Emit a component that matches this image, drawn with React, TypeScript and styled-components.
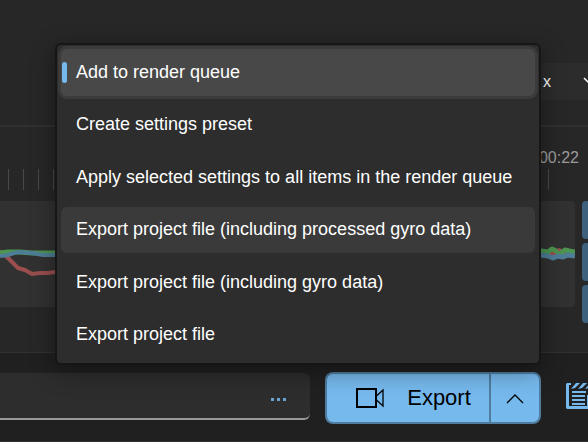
import React from "react";
import styled, { createGlobalStyle } from "styled-components";

const GlobalStyle = createGlobalStyle`
  *, *::before, *::after { box-sizing: border-box; }
  html, body, #root { height: 100%; }
  body {
    margin: 0;
    overflow: hidden;
    background: #272727;
    color: #ffffff;
    font-family: "Liberation Sans", Arial, sans-serif;
  }
  button, select { font: inherit; color: inherit; border: 0; margin: 0; padding: 0; }
`;

const Page = styled.main`
  display: flex;
  flex-direction: column;
  min-height: 100%;
  overflow: hidden;
`;

const PlayerBar = styled.header`
  display: flex;
  justify-content: flex-end;
  padding: 63px 0 25px;
  border-bottom: 2px solid #313131;
`;

const Combo = styled.label`
  position: relative;
  display: flex;
  width: 56px;
  height: 37px;
  background: #2c2c2c;
`;

const ComboSelect = styled.select`
  width: 100%;
  padding-left: 11px;
  appearance: none;
  background: transparent;
  font-size: 16px;
`;

const ComboArrow = styled.svg`
  position: absolute;
  right: -7px;
  top: 14px;
  pointer-events: none;
`;

const Timeline = styled.section`
  display: flex;
  gap: 7px;
  height: 225px;
  padding: 21px 0 29px;
`;

const Tracks = styled.div`
  display: flex;
  flex: 1;
  flex-direction: column;
  min-width: 0;
`;

const TimeLabel = styled.time`
  align-self: flex-end;
  margin-right: -4px;
  font-size: 16px;
  line-height: 20px;
  color: #9b9b9b;
`;

const Ruler = styled.div`
  height: 21px;
  margin: 1px 24px 11px 0;
  background: repeating-linear-gradient(to right, transparent 0 8px, #484848 8px 9px, transparent 9px 15px);
`;

const Chart = styled.svg`
  display: block;
  width: 100%;
  height: 106px;
  border-radius: 0 4px 4px 0;
  background: #313131;
`;

const SideButtons = styled.div`
  display: flex;
  flex-direction: column;
  gap: 4px;
  padding-top: 53px;
  width: 6px;
`;

const SideButton = styled.button`
  height: 38px;
  border-radius: 4px 0 0 4px;
  background: #3d607c;
`;

const Footer = styled.footer`
  display: flex;
  flex: 1;
  align-items: flex-start;
  gap: 15px;
  padding-top: 19px;
  border-top: 1px solid #313131;
  border-bottom: 1px solid #313131;
  background: #202020;
`;

const OutputField = styled.div`
  display: flex;
  flex: 1;
  align-items: center;
  height: 47px;
  margin-top: 1px;
  padding-right: 18px;
  border-bottom: 2px solid #999999;
  border-radius: 0 6px 6px 0;
  background: #2d2d2d;
`;

const PathInput = styled.input`
  flex: 1;
  min-width: 0;
  border: 0;
  outline: 0;
  background: transparent;
  color: #ffffff;
  font: inherit;
`;

const BrowseButton = styled.button`
  display: flex;
  align-items: center;
  justify-content: center;
  width: 28px;
  height: 28px;
  padding-top: 6px;
  background: transparent;
`;

const ExportGroup = styled.div`
  position: relative;
  display: flex;
  width: 216px;
  height: 52px;
`;

const ExportButton = styled.button`
  display: flex;
  flex: 1;
  align-items: center;
  justify-content: center;
  gap: 23px;
  padding-left: 11px;
  border: 2px solid #507d9f;
  border-right-width: 0;
  border-radius: 8px 0 0 8px;
  background: #76b9ed;
  color: #000000;
  font-size: 22px;
`;

const ExpandButton = styled.button`
  display: flex;
  align-items: center;
  justify-content: center;
  width: 52px;
  border: 2px solid #507d9f;
  border-radius: 0 8px 8px 0;
  background: #76b9ed;
  color: #000000;
`;

const QueueButton = styled.button`
  display: flex;
  align-items: center;
  width: 22px;
  height: 48px;
  margin-left: 10px;
  overflow: hidden;
  background: transparent;

  svg { flex-shrink: 0; }
`;

const Menu = styled.div`
  position: absolute;
  right: 0;
  bottom: calc(100% + 7px);
  z-index: 1;
  display: grid;
  grid-template-rows: repeat(6, 1fr);
  width: 486px;
  height: 322px;
  padding: 1px 1px 2px;
  border: 2px solid #161616;
  border-radius: 6px;
  background: #2d2d2d;
  box-shadow: 0 6px 24px rgba(0, 0, 0, 0.4);
`;

const MenuItem = styled.button<{ $tone?: "current" | "hover" }>`
  display: flex;
  align-items: center;
  margin: 3px;
  padding-left: 15px;
  border-radius: 6px;
  background: ${({ $tone }) => ($tone === "current" ? "#484848" : $tone === "hover" ? "#3a3a3a" : "transparent")};
  box-shadow: ${({ $tone }) => ($tone === "current" ? "0 0 0 3px #3b3b3b" : "none")};
  font-size: 18px;
  text-align: left;
  white-space: nowrap;

  &::before {
    content: "";
    display: ${({ $tone }) => ($tone === "current" ? "block" : "none")};
    width: 5px;
    height: 21px;
    margin-left: -14px;
    margin-right: 9px;
    border-radius: 3px;
    background: #76b9ed;
  }
`;

const menuItems: { label: string; tone?: "current" | "hover" }[] = [
  { label: "Add to render queue", tone: "current" },
  { label: "Create settings preset" },
  { label: "Apply selected settings to all items in the render queue" },
  { label: "Export project file (including processed gyro data)", tone: "hover" },
  { label: "Export project file (including gyro data)" },
  { label: "Export project file" },
];

const GyroChart = () => (
  <Chart viewBox="0 0 575 106" preserveAspectRatio="none" aria-label="Gyro data">
    <g fill="none" strokeWidth="4" strokeLinejoin="round">
      <path stroke="#9a4e4e" d="M0 50L4 53 8 57 13 62 18 67 25 69 32 73 40 72 48 72 55 71 120 60 300 54 541 52 548 52 552 54 559 49 565 52 575 51" />
      <path stroke="#4d9550" strokeWidth="5" d="M0 52L8 51 20 51 32 52 45 52 55 52 300 52 541 50 548 51 552 48 556 50 561 52 565 49 569 50 575 51" />
      <path stroke="#4e7e97" d="M0 55L8 54 14 52 20 51 32 52 43 54 55 54 300 55 541 54" />
      <path stroke="#4e7e97" strokeWidth="5" d="M541 54L548 55 553 57 558 55 563 56 568 54 575 55" />
    </g>
    <path fill="#9a4e4e" d="M551 51h3v3h-3zM558 48h2v2h-2z" />
  </Chart>
);

export default function App() {
  return (
    <>
      <GlobalStyle />
      <Page>
        <PlayerBar>
          <Combo>
            <ComboSelect aria-label="Playback speed">
              <option>x</option>
            </ComboSelect>
            <ComboArrow width="12" height="8" viewBox="0 0 12 8" fill="none" stroke="#ffffff" strokeWidth="1.5">
              <path d="M1 1l5 5 5-5" />
            </ComboArrow>
          </Combo>
        </PlayerBar>
        <Timeline>
          <Tracks>
            <TimeLabel>00:00:22</TimeLabel>
            <Ruler />
            <GyroChart />
          </Tracks>
          <SideButtons>
            <SideButton aria-label="Gyro X" />
            <SideButton aria-label="Gyro Y" />
            <SideButton aria-label="Gyro Z" />
          </SideButtons>
        </Timeline>
        <Footer>
          <OutputField>
            <PathInput aria-label="Output path" />
            <BrowseButton aria-label="Browse">
              <svg width="16" height="4" viewBox="0 0 16 4" fill="#68a3d1">
                <path d="M1 1h3v3H1zM7 1h3v3H7zM13 1h3v3h-3z" />
              </svg>
            </BrowseButton>
          </OutputField>
          <ExportGroup>
            <ExportButton>
              <svg width="28" height="20" viewBox="0 0 28 20" fill="none" stroke="currentColor">
                <path strokeWidth="2" d="M1 1h19v18H1z" />
                <path strokeWidth="1.3" d="M20.500 8l6.500-6v16l-6.500-6" />
              </svg>
              Export
            </ExportButton>
            <ExpandButton aria-label="More export options" aria-expanded="true">
              <svg width="18" height="11" viewBox="0 0 18 11" fill="none" stroke="currentColor" strokeWidth="1.3">
                <path d="M1 10l8-8 8 8" />
              </svg>
            </ExpandButton>
            <Menu role="menu">
              {menuItems.map(({ label, tone }) => (
                <MenuItem key={label} role="menuitem" $tone={tone}>
                  {label}
                </MenuItem>
              ))}
            </Menu>
          </ExportGroup>
          <QueueButton aria-label="Render queue">
            <svg width="32" height="26" viewBox="0 0 32 26" fill="#76b9ed">
              <path d="M1 0H5V2H3V23H32V26H1L0 25V1Z" />
              <path d="M5 6L10 0H14L9 5ZM12 6L17 0H21L16 5ZM19 6L24 0H28L23 5Z" />
              <path d="M6 8H20V10H6ZM6 12H19V14H6ZM6 16H19V18H6ZM6 20H19V22H6ZM21 12H24V23H21Z" />
            </svg>
          </QueueButton>
        </Footer>
      </Page>
    </>
  );
}
